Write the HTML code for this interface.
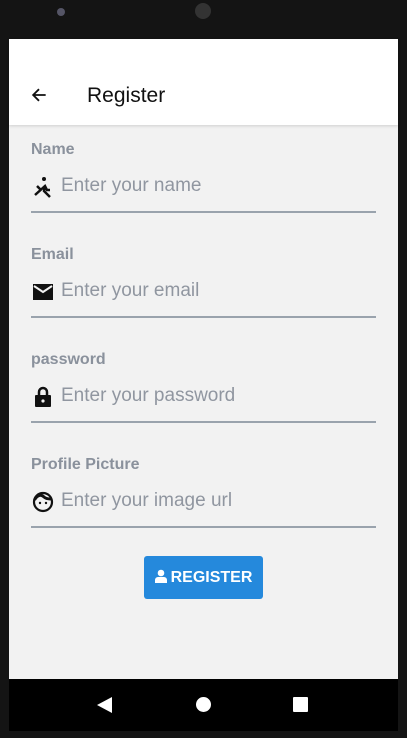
<!DOCTYPE html>
<html><head><style>
body{margin:0;width:407px;height:738px;background:#141414;position:relative;overflow:hidden;font-family:"Liberation Sans",sans-serif}
.scr{position:absolute;left:9px;top:39px;width:389px;height:640px;background:#f2f2f2}
.hdr{position:absolute;left:0;top:0;width:389px;height:86px;background:#fff;box-shadow:0 1px 3px rgba(0,0,0,.15)}
.t{position:absolute;left:78px;top:45px;font-size:21px;color:#111}
.f{position:absolute;left:22px;width:345px}
.lb{font-size:16px;font-weight:bold;color:#8a919c;position:absolute;top:1px}
.in{position:absolute;left:30px;top:35px;font-size:19px;color:#9096a0}
.ln{position:absolute;top:71px;left:0;width:345px;height:2px;background:#9aa3ad}
.ic{position:absolute;left:0;top:35px;width:24px;height:24px}
.nav{position:absolute;left:9px;top:679px;width:389px;height:52px;background:#000}
.btn{position:absolute;left:135px;top:517px;width:119px;height:43px;background:#2589dc;border-radius:3px;color:#fff;font-size:16px;font-weight:bold;text-align:center;line-height:43px}
</style></head><body>
<div style="position:absolute;left:57px;top:8px;width:8px;height:8px;border-radius:50%;background:#556"></div>
<div style="position:absolute;left:195px;top:3px;width:16px;height:16px;border-radius:50%;background:#333"></div>
<div class="scr">
<div class="hdr">
<svg style="position:absolute;left:20px;top:46px" width="20" height="20" viewBox="0 0 24 24"><path d="M20 12H5M12 5l-7 7 7 7" stroke="#111" stroke-width="2.2" fill="none"/></svg>
<div class="t">Register</div></div>
<div class="f" style="top:101px"><div class="lb">Name</div>
<svg class="ic" viewBox="0 0 24 24"><circle cx="13" cy="4" r="2" fill="#111"/><path d="M4 20l10-9 2 4 3 0M9 14l-3-3M14 11l-1 5 6 6" stroke="#111" stroke-width="2.5" fill="none"/></svg>
<div class="in">Enter your name</div><div class="ln"></div></div>
<div class="f" style="top:206px"><div class="lb">Email</div>
<svg class="ic" viewBox="0 0 24 24"><path d="M2 4h20v16H2z" fill="#111"/><path d="M3 6l9 6 9-6" stroke="#f2f2f2" stroke-width="2" fill="none"/></svg>
<div class="in">Enter your email</div><div class="ln"></div></div>
<div class="f" style="top:311px"><div class="lb">password</div>
<svg class="ic" viewBox="0 0 24 24"><path d="M8 10V7a4 4 0 018 0v3" stroke="#111" stroke-width="2.5" fill="none"/><rect x="4" y="10" width="16" height="12" rx="1" fill="#111"/><circle cx="12" cy="16" r="1.6" fill="#f2f2f2"/></svg>
<div class="in">Enter your password</div><div class="ln"></div></div>
<div class="f" style="top:416px"><div class="lb">Profile Picture</div>
<svg class="ic" viewBox="0 0 24 24"><circle cx="12" cy="12" r="9" stroke="#111" stroke-width="2.2" fill="none"/><path d="M3.5 10C6 5 10 4 13 7c2 2 5 2 7 2" stroke="#111" stroke-width="3" fill="none"/><circle cx="9" cy="13" r="1.2" fill="#111"/><circle cx="15" cy="13" r="1.2" fill="#111"/></svg>
<div class="in">Enter your image url</div><div class="ln"></div></div>
<div class="btn"><svg width="12" height="14" viewBox="0 0 12 14" style="vertical-align:-1px;margin-right:4px"><circle cx="6" cy="4" r="3.3" fill="#fff"/><path d="M0 14v-3a3 3 0 013-3h6a3 3 0 013 3v3z" fill="#fff"/></svg>REGISTER</div>
</div>
<div class="nav">
<svg style="position:absolute;left:88px;top:18px" width="16" height="16"><path d="M15 0v16L0 8z" fill="#fff"/></svg>
<div style="position:absolute;left:187px;top:18px;width:15px;height:15px;border-radius:50%;background:#fff"></div>
<div style="position:absolute;left:284px;top:18px;width:15px;height:15px;background:#fff;border-radius:1px"></div>
</div>
</body></html>
